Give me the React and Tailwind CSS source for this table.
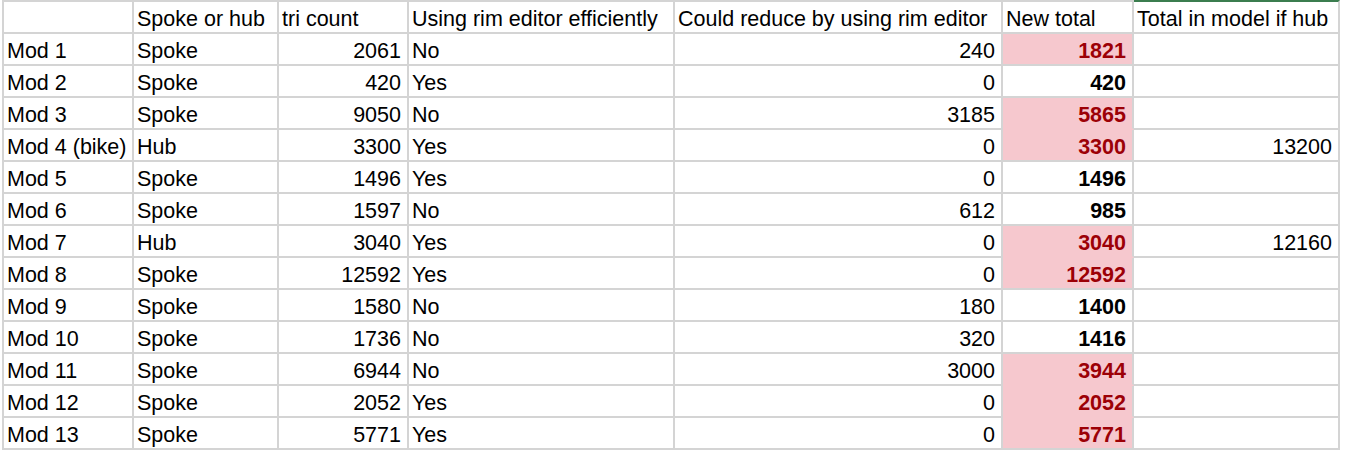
const headers = [
  'Spoke or hub',
  'tri count',
  'Using rim editor efficiently',
  'Could reduce by using rim editor',
  'New total',
  'Total in model if hub',
]

const rows = [
  ['Mod 1', 'Spoke', 2061, 'No', 240, 1821, true, ''],
  ['Mod 2', 'Spoke', 420, 'Yes', 0, 420, false, ''],
  ['Mod 3', 'Spoke', 9050, 'No', 3185, 5865, true, ''],
  ['Mod 4 (bike)', 'Hub', 3300, 'Yes', 0, 3300, true, 13200],
  ['Mod 5', 'Spoke', 1496, 'Yes', 0, 1496, false, ''],
  ['Mod 6', 'Spoke', 1597, 'No', 612, 985, false, ''],
  ['Mod 7', 'Hub', 3040, 'Yes', 0, 3040, true, 12160],
  ['Mod 8', 'Spoke', 12592, 'Yes', 0, 12592, true, ''],
  ['Mod 9', 'Spoke', 1580, 'No', 180, 1400, false, ''],
  ['Mod 10', 'Spoke', 1736, 'No', 320, 1416, false, ''],
  ['Mod 11', 'Spoke', 6944, 'No', 3000, 3944, true, ''],
  ['Mod 12', 'Spoke', 2052, 'Yes', 0, 2052, true, ''],
  ['Mod 13', 'Spoke', 5771, 'Yes', 0, 5771, true, ''],
]

const cell = 'h-[32px] border-r-2 border-b-2 border-[#d4d4d4] pt-[3px] leading-[28px] whitespace-nowrap overflow-hidden'

export default function App() {
  return (
    <div className="w-[1346px] h-[450px] bg-white overflow-hidden text-black text-[21.5px] font-['Liberation_Sans',Arial,sans-serif]">
      <div className="ml-[2px] w-[1338px] border-l-2 border-[#d4d4d4] grid grid-cols-[130px_145px_130px_266px_328px_131px_206px]">
        <div className={`${cell} h-[34px] border-t-2`}></div>
        {headers.map((h, i) => (
          <div
            key={h}
            className={`${cell} h-[34px] border-t-2 pl-[3px] ${i === headers.length - 1 ? 'border-t-[#3b7d4f]' : ''}`}
          >
            {h}
          </div>
        ))}

        {rows.map((r, idx) => {
          const nextPink = rows[idx + 1]?.[6]
          return [
            <div key={`a${idx}`} className={`${cell} pl-[3px]`}>{r[0]}</div>,
            <div key={`b${idx}`} className={`${cell} pl-[3px]`}>{r[1]}</div>,
            <div key={`c${idx}`} className={`${cell} text-right pr-[6px]`}>{r[2]}</div>,
            <div key={`d${idx}`} className={`${cell} pl-[3px]`}>{r[3]}</div>,
            <div key={`e${idx}`} className={`${cell} text-right pr-[6px]`}>{r[4]}</div>,
            <div
              key={`f${idx}`}
              className={`${cell} text-right pr-[6px] font-bold ${
                r[6] ? 'bg-[#f6c8ce] text-[#9c0006]' : ''
              } ${r[6] && nextPink ? 'border-b-[#f6c8ce]' : ''}`}
            >
              {r[5]}
            </div>,
            <div key={`g${idx}`} className={`${cell} text-right pr-[6px]`}>{r[7]}</div>,
          ]
        })}
      </div>
    </div>
  )
}
